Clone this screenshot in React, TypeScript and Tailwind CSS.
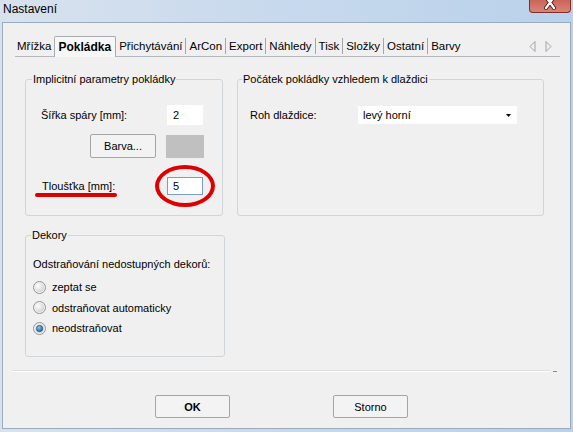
import React from 'react'

// Záložky v hlavičce dialogu
const tabs = ['Mřížka', 'Pokládka', 'Přichytávání', 'ArCon', 'Export', 'Náhledy', 'Tisk', 'Složky', 'Ostatní', 'Barvy']
const activeTab = 'Pokládka'

function Radio({ checked }: { checked?: boolean }) {
  return (
    <svg width="13" height="13" viewBox="0 0 13 13" className="shrink-0">
      <defs>
        <radialGradient id={checked ? 'rin1' : 'rin0'} cx="0.35" cy="0.35" r="0.8">
          <stop offset="0" stopColor="#ffffff" />
          <stop offset="1" stopColor="#cbcbcb" />
        </radialGradient>
        <radialGradient id="rdot" cx="0.4" cy="0.35" r="0.7">
          <stop offset="0" stopColor="#8ec6ee" />
          <stop offset="1" stopColor="#1c5d8f" />
        </radialGradient>
      </defs>
      <circle cx="6.5" cy="6.5" r="6" fill="#f2f2f2" stroke="#939393" />
      <circle cx="6.5" cy="6.5" r="4.6" fill={`url(#${checked ? 'rin1' : 'rin0'})`} />
      {checked && <circle cx="6.5" cy="6.5" r="3.2" fill="url(#rdot)" stroke="#1a4f7a" strokeWidth="0.6" />}
    </svg>
  )
}

function Button({ children, className = '' }: { children: React.ReactNode; className?: string }) {
  return (
    <div className={`flex items-center justify-center border border-[#a5a5a5] rounded-[2px] bg-[#f3f3f3] ${className}`}>
      {children}
    </div>
  )
}

export default function App() {
  return (
    <div className="w-[573px] h-[432px] flex flex-col bg-gradient-to-r from-[#d8e2ed] via-[#c7d9ed] to-[#b9d1ea] font-['Liberation_Sans',Arial,sans-serif] text-[11px] leading-[14px] text-black overflow-hidden">
      {/* titulek okna */}
      <div className="h-[22px] flex items-start justify-between shrink-0">
        <div className="pl-[3px] text-[12px] leading-[18px]">Nastavení</div>
        <div className="mr-[2px] w-[42px] h-[13px] border border-t-0 border-[#7d2f29] rounded-b-[4px] bg-gradient-to-b from-[#c96558] to-[#d98576] flex justify-center">
          <svg width="14" height="12" viewBox="0 0 14 12">
            <path d="M3 -3 L11 8 M11 -3 L3 8" stroke="#5a1a15" strokeWidth="4" strokeLinecap="round" />
            <path d="M3 -3 L11 8 M11 -3 L3 8" stroke="#ffffff" strokeWidth="2.2" strokeLinecap="round" />
          </svg>
        </div>
      </div>

      {/* klientská oblast */}
      <div className="mx-[2px] mb-[3px] h-[407px] border border-[#9aabbe] bg-[#f0f0f0] flex flex-col">
        {/* hlavička záložek */}
        <div className="ml-[12px] mt-[13px] w-[545px] h-[21px] flex items-end border-b border-[#b4b8bc] text-[11.5px]">
          {tabs.map((t, i) => {
            if (t === activeTab) {
              return (
                <div key={t} className="h-[21px] -mb-px px-[4px] flex items-center border border-b-0 border-[#a8acb0] rounded-t-[2px] bg-[#f7f7f7] font-bold text-[12px]">
                  {t}
                </div>
              )
            }
            const showDivider = i < tabs.length - 1 && tabs[i + 1] !== activeTab
            return (
              <div key={t} className="h-[20px] flex items-center">
                <span className={i === 0 ? 'pl-[2px] pr-[2px]' : 'px-[3px]'}>{t}</span>
                {showDivider && <span className="w-px h-[16px] bg-[#a5a5a5]"></span>}
              </div>
            )
          })}
          <div className="ml-auto mr-[8px] h-[20px] flex items-center gap-[9px]">
            <svg width="7" height="11" viewBox="0 0 7 11">
              <path d="M6 0.5 L1 5.5 L6 10.5 Z" fill="none" stroke="#a3a3a3" />
            </svg>
            <svg width="7" height="11" viewBox="0 0 7 11">
              <path d="M1 0.5 L6 5.5 L1 10.5 Z" fill="none" stroke="#a3a3a3" />
            </svg>
          </div>
        </div>

        {/* obsah záložky Pokládka */}
        <div className="pl-[22px] pt-[15px] flex flex-col">
          <div className="flex gap-[14px]">
            {/* Implicitní parametry */}
            <fieldset className="w-[198px] h-[144px] border border-[#d0d5d9] rounded-[3px]">
              <legend className="ml-[6px] px-[1px]">Implicitní parametry pokládky</legend>
              <div className="mt-[19px] pl-[15px] h-[20px] flex items-center">
                <span className="w-[126px]">Šířka spáry [mm]:</span>
                <div className="w-[36px] h-[20px] bg-white flex items-center pl-[6px]">2</div>
              </div>
              <div className="mt-[9px] pl-[15px] flex items-center">
                <Button className="ml-[49px] w-[66px] h-[24px]">Barva...</Button>
                <div className="ml-[10px] w-[38px] h-[23px] bg-[#c0c0c0]"></div>
              </div>
              <div className="relative mt-[19px] pl-[16px] h-[18px] flex items-center">
                <span className="w-[125px]">Tloušťka [mm]:</span>
                <div className="w-[36px] h-[18px] bg-white border border-[#7a9ec8] flex items-center pl-[5px]">5</div>
                {/* červené zvýraznění */}
                <div className="absolute left-[9px] top-[16px] w-[82px] h-[4px] rounded-full bg-[#d90000]"></div>
                <div className="absolute left-[129px] top-[-12px] w-[60px] h-[42px] rounded-[50%] border-[4px] border-[#dc0000]"></div>
              </div>
            </fieldset>

            {/* Počátek pokládky */}
            <fieldset className="w-[307px] h-[144px] border border-[#d0d5d9] rounded-[3px]">
              <legend className="ml-[4px] px-[1px]">Počátek pokládky vzhledem k dlaždici</legend>
              <div className="mt-[20px] pl-[12px] h-[18px] flex items-center">
                <span className="w-[108px]">Roh dlaždice:</span>
                <div className="w-[159px] h-[18px] bg-white flex items-center pl-[5px]">
                  <span className="flex-1">levý horní</span>
                  <svg width="5" height="3" viewBox="0 0 5 3" className="mr-[6px]">
                    <path d="M0 0 H5 L2.5 3 Z" fill="#000" />
                  </svg>
                </div>
              </div>
            </fieldset>
          </div>

          {/* Dekory */}
          <fieldset className="mt-[12px] w-[200px] h-[129px] border border-[#d0d5d9] rounded-[3px]">
            <legend className="ml-[5px] px-[1px]">Dekory</legend>
            <div className="mt-[15px] pl-[7px]">Odstraňování nedostupných dekorů:</div>
            <div className="mt-[6px] pl-[7px] flex flex-col">
              {[
                { label: 'zeptat se', checked: false },
                { label: 'odstraňovat automaticky', checked: false },
                { label: 'neodstraňovat', checked: true },
              ].map((r) => (
                <div key={r.label} className="h-[20.5px] flex items-center gap-[6px]">
                  <Radio checked={r.checked} />
                  <span>{r.label}</span>
                </div>
              ))}
            </div>
          </fieldset>
        </div>

        {/* oddělovač */}
        <div className="ml-[10px] mt-[13px] flex items-center">
          <div className="w-[537px] h-[2px] border-t border-[#dcdcdc] border-b border-b-white"></div>
          <div className="ml-[3px] w-[4px] h-px bg-[#8a8a8a]"></div>
        </div>

        {/* tlačítka */}
        <div className="mt-[23px] ml-[152px] flex">
          <Button className="w-[75px] h-[23px] font-bold">OK</Button>
          <Button className="ml-[103px] w-[75px] h-[23px]">Storno</Button>
        </div>
      </div>
    </div>
  )
}
